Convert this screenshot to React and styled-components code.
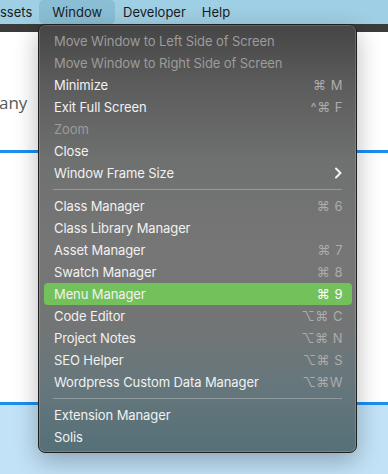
import React from 'react'
import styled, { createGlobalStyle } from 'styled-components'

const GlobalStyle = createGlobalStyle`
  html, body {
    margin: 0;
    padding: 0;
    background: #c2e2f7;
    font-family: Inter, "Noto Sans", "DejaVu Sans", sans-serif;
    -webkit-font-smoothing: antialiased;
  }
`

const items = [
  { label: 'Move Window to Left Side of Screen', disabled: true },
  { label: 'Move Window to Right Side of Screen', disabled: true },
  { label: 'Minimize', keys: '⌘ M' },
  { label: 'Exit Full Screen', keys: '^⌘ F' },
  { label: 'Zoom', disabled: true },
  { label: 'Close' },
  { label: 'Window Frame Size', submenu: true },
  { separator: true },
  { label: 'Class Manager', keys: '⌘ 6' },
  { label: 'Class Library Manager' },
  { label: 'Asset Manager', keys: '⌘ 7' },
  { label: 'Swatch Manager', keys: '⌘ 8' },
  { label: 'Menu Manager', keys: '⌘ 9', active: true },
  { label: 'Code Editor', keys: '⌥⌘ C' },
  { label: 'Project Notes', keys: '⌥⌘ N' },
  { label: 'SEO Helper', keys: '⌥⌘ S' },
  { label: 'Wordpress Custom Data Manager', keys: '⌥⌘W' },
  { separator: true },
  { label: 'Extension Manager' },
  { label: 'Solis' }
]

const App = () => {
  return (
    <Screen>
      <GlobalStyle />
      <MenuBar>
        <BarItem>ssets</BarItem>
        <BarItem open>Window</BarItem>
        <BarItem>Developer</BarItem>
        <BarItem>Help</BarItem>
      </MenuBar>
      <Toolbar />
      <Page>
        <Heading>any</Heading>
        <BlueRule />
        <Blank />
        <BlueRule />
      </Page>
      <Dropdown>
        {items.map((item, index) =>
          item.separator ? (
            <Separator key={index} />
          ) : (
            <Row key={index} disabled={item.disabled} active={item.active}>
              <span>{item.label}</span>
              {item.keys && <Keys active={item.active}>{item.keys}</Keys>}
              {item.submenu && (
                <Chevron viewBox='0 0 8 12' width='8' height='12'>
                  <path d='M2 1.5 L6.5 6 L2 10.5' fill='none' stroke='#f4f4f4' strokeWidth='2' strokeLinecap='round' strokeLinejoin='round' />
                </Chevron>
              )}
            </Row>
          )
        )}
      </Dropdown>
    </Screen>
  )
}

const Screen = styled.div`
  position: relative;
  width: 388px;
  height: 474px;
  overflow: hidden;
  background: #c2e2f7;
`

const MenuBar = styled.div`
  display: flex;
  align-items: center;
  height: 24px;
  background: #9fcfe4;
`

const BarItem = styled.div`
  height: 24px;
  display: flex;
  align-items: center;
  padding: ${({ open }) => (open ? '0 13px' : '0 8px')};
  border-radius: 5px;
  font-size: 13px;
  color: #1c1c1c;
  background: ${({ open }) => (open ? '#89bed5' : 'transparent')};
  &:first-child {
    padding: 0 7px 0 0;
  }
`

const Toolbar = styled.div`
  height: 8px;
  background: #3b3b3b;
`

const Page = styled.div`
  background: #fff;
  padding-top: 58px;
`

const Heading = styled.div`
  font-family: "Open Sans", Inter, sans-serif;
  font-size: 17px;
  color: #5a5a5a;
  height: 26px;
  line-height: 26px;
  margin-left: -1px;
`

const BlueRule = styled.div`
  height: 3px;
  background: #1b8ef2;
  margin-top: 34px;
  &:last-child {
    margin-top: 0;
  }
`

const Blank = styled.div`
  height: 249px;
`

const Dropdown = styled.div`
  position: absolute;
  left: 38px;
  top: 24px;
  width: 317px;
  padding: 5px 0 4px;
  border-radius: 7px;
  border: 1px solid #1f1f1f;
  box-shadow: inset 0 0 0 1px rgba(255, 255, 255, 0.16), 0 8px 24px rgba(0, 0, 0, 0.28);
  background: linear-gradient(
    180deg,
    #454545 0%,
    #5c5c5c 14%,
    #6f7070 32%,
    #767676 52%,
    #737575 70%,
    #66777c 84%,
    #557078 100%
  );
`

const Row = styled.div`
  display: flex;
  align-items: center;
  justify-content: space-between;
  height: 22px;
  margin: 0 4px 0 5px;
  padding: 0 9px 0 10px;
  border-radius: 4px;
  font-size: 13px;
  letter-spacing: -0.1px;
  color: ${({ disabled }) => (disabled ? '#9c9c9c' : '#f1f1f1')};
  background: ${({ active }) => (active ? '#73c15b' : 'transparent')};
`

const Keys = styled.span`
  font-size: 13px;
  color: ${({ active }) => (active ? '#ffffff' : '#acacac')};
  letter-spacing: 0.5px;
  white-space: pre;
`

const Chevron = styled.svg`
  margin-right: 1px;
`

const Separator = styled.div`
  height: 1px;
  margin: 5px 14px;
  background: rgba(210, 210, 210, 0.4);
`

export default App
